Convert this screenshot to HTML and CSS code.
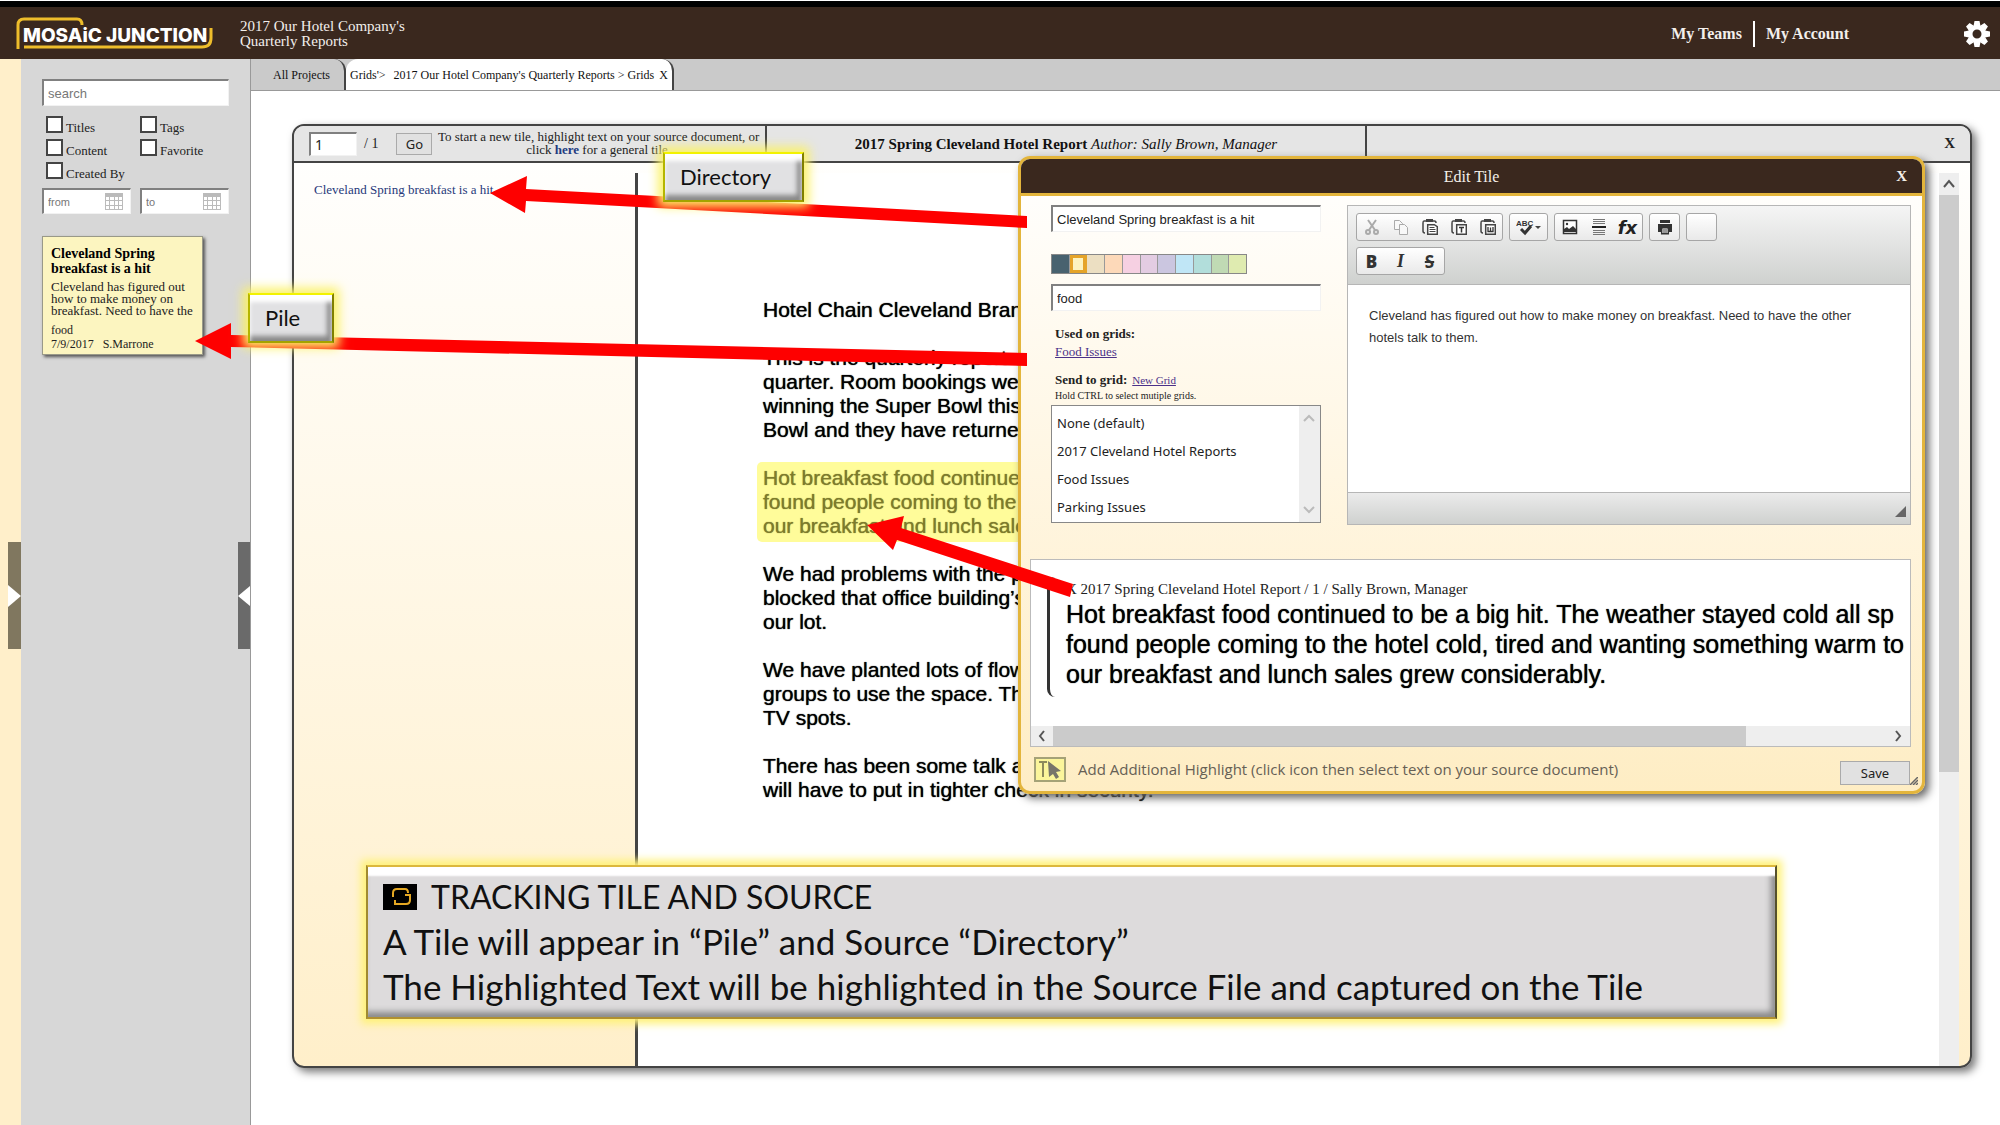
FILE: index.html
```html
<!DOCTYPE html>
<html lang="en">
<head>
<meta charset="utf-8">
<title>Mosaic Junction - Edit Tile</title>
<link rel="stylesheet" href="styles.css">
</head>
<body>
<header class="topbar">
  <svg class="logo" width="200" height="36" viewBox="0 0 200 36" role="img" aria-label="Mosaic Junction">
    <path d="M2 33V9Q2 3 8 3H61Q66 3 66 9" fill="none" stroke="#eebd2b" stroke-width="3"/>
    <path d="M8 31H186Q195 31 195 22V12" fill="none" stroke="#eebd2b" stroke-width="3"/>
    <text class="logo-text" x="7" y="26">MOSAiC JUNCTION</text>
  </svg>
  <h1 class="project">2017 Our Hotel Company's<br>Quarterly Reports</h1>
  <nav class="account">
    <a href="#teams">My Teams</a>
    <a href="#account">My Account</a>
  </nav>
  <button class="gear" aria-label="Settings">
    <svg width="26" height="26" viewBox="0 0 26 26"><g fill="#fff"><path fill-rule="evenodd" d="M13 4a9 9 0 1 0 0 18a9 9 0 1 0 0-18zM13 8.500a4.500 4.500 0 1 1 0 9a4.500 4.500 0 1 1 0-9z"/><g id="teeth"><path d="M10.500 0h5l1 5h-7zM10.500 26h5l1-5h-7zM0 10.500v5l5 1v-7zM26 10.500v5l-5 1v-7z"/></g><use href="#teeth" transform="rotate(45 13 13)"/></g></svg>
  </button>
</header>

<div class="shell">
  <div class="rail"><button class="handle handle-open" aria-label="Open panel"><svg width="13" height="22" viewBox="0 0 13 22"><path d="M0 0L13 11L0 22z" fill="#fff"/></svg></button></div>
  <aside class="sidebar">
    <input class="field search" type="text" placeholder="search" aria-label="Search">
    <div class="filters">
      <label><input type="checkbox"><span>Titles</span></label>
      <label><input type="checkbox"><span>Tags</span></label>
      <label><input type="checkbox"><span>Content</span></label>
      <label><input type="checkbox"><span>Favorite</span></label>
      <label><input type="checkbox"><span>Created By</span></label>
    </div>
    <div class="dates">
      <div class="field date"><input type="text" placeholder="from" aria-label="From date"><svg width="18" height="17" viewBox="0 0 18 17"><path d="M0 0h18v17H0z" fill="#bbb"/><path d="M1 4h3v3H1zM5 4h4v3H5zM10 4h3v3h-3zM14 4h3v3h-3zM1 8h3v4H1zM5 8h4v4H5zM10 8h3v4h-3zM14 8h3v4h-3zM1 13h3v3H1zM5 13h4v3H5zM10 13h3v3h-3zM14 13h3v3h-3z" fill="#fff"/></svg></div>
      <div class="field date"><input type="text" placeholder="to" aria-label="To date"><svg width="18" height="17" viewBox="0 0 18 17"><path d="M0 0h18v17H0z" fill="#bbb"/><path d="M1 4h3v3H1zM5 4h4v3H5zM10 4h3v3h-3zM14 4h3v3h-3zM1 8h3v4H1zM5 8h4v4H5zM10 8h3v4h-3zM14 8h3v4h-3zM1 13h3v3H1zM5 13h4v3H5zM10 13h3v3h-3zM14 13h3v3h-3z" fill="#fff"/></svg></div>
    </div>
    <article class="tile">
      <h2>Cleveland Spring breakfast is a hit</h2>
      <p class="tile-body">Cleveland has figured out<br>how to make money on<br>breakfast. Need to have the</p>
      <p class="tile-meta">food<br>7/9/2017 &nbsp; S.Marrone</p>
    </article>
    <button class="handle handle-close" aria-label="Close panel"><svg width="12" height="20" viewBox="0 0 12 20"><path d="M12 0L0 10L12 20z" fill="#fff"/></svg></button>
  </aside>

  <main class="workspace">
    <nav class="tabs">
      <a class="tab" href="#all">All Projects</a>
      <a class="tab active" href="#grids"><span>Grids'&gt;</span><span class="crumb">2017 Our Hotel Company's Quarterly Reports &gt; Grids</span><span>X</span></a>
    </nav>

    <section class="source">
      <header class="source-head">
        <form class="pager">
          <input class="field page" type="text" value="1" aria-label="Page">
          <span class="total">/ 1</span>
          <button class="btn go" type="button">Go</button>
          <p class="hint">To start a new tile, highlight text on your source document, or<br>click <a href="#new">here</a> for a general tile.</p>
        </form>
        <h2 class="source-title">2017 Spring Cleveland Hotel Report <em>Author: Sally Brown, Manager</em></h2>
        <div class="source-end"><button class="close" aria-label="Close source">X</button></div>
      </header>
      <div class="source-body">
        <div class="directory"><a href="#tile">Cleveland Spring breakfast is a hit</a></div>
        <div class="document">
          <p>Hotel Chain Cleveland Branch</p>
          <p>This is the quarterly report of the<br>quarter. Room bookings were up<br>winning the Super Bowl this year<br>Bowl and they have returned</p>
          <p class="marked">Hot breakfast food continued to be<br>found people coming to the hotel<br>our breakfast and lunch sales grew</p>
          <p>We had problems with the parking<br>blocked that office building’s lot<br>our lot.</p>
          <p>We have planted lots of flowers<br>groups to use the space. They<br>TV spots.</p>
          <p>There has been some talk about<br>will have to put in tighter check in security.</p>
        </div>
        <div class="vscroll">
          <svg width="20" height="22" viewBox="0 0 20 22"><path d="M5 14L10 8L15 14" fill="none" stroke="#555" stroke-width="2"/></svg>
          <div class="vthumb"></div>
        </div>
      </div>

      <section class="dialog" role="dialog" aria-label="Edit Tile">
        <header class="dialog-head"><h2>Edit Tile</h2><button class="close" aria-label="Close dialog">X</button></header>
        <div class="dialog-main">
          <div class="form">
            <input class="field" type="text" value="Cleveland Spring breakfast is a hit" aria-label="Title">
            <div class="swatches">
              <button class="sw c1" aria-label="Slate"></button><button class="sw c2" aria-label="Yellow"></button><button class="sw c3" aria-label="Sand"></button><button class="sw c4" aria-label="Peach"></button><button class="sw c5" aria-label="Pink"></button><button class="sw c6" aria-label="Mauve"></button><button class="sw c7" aria-label="Lavender"></button><button class="sw c8" aria-label="Sky"></button><button class="sw c9" aria-label="Teal"></button><button class="sw c10" aria-label="Green"></button><button class="sw c11" aria-label="Lime"></button>
            </div>
            <input class="field" type="text" value="food" aria-label="Tags">
            <div class="grids">
              <p><b>Used on grids:</b><br><a href="#food">Food Issues</a></p>
              <p class="send"><label for="grid-list"><b>Send to grid:</b></label><a class="small" href="#newgrid">New Grid</a></p>
              <p class="note">Hold CTRL to select mutiple grids.</p>
            </div>
            <div class="listbox">
              <select id="grid-list" multiple size="4">
                <option>None (default)</option><option>2017 Cleveland Hotel Reports</option><option>Food Issues</option><option>Parking Issues</option>
              </select>
              <div class="list-scroll">
                <svg width="12" height="8" viewBox="0 0 12 8"><path d="M1 7L6 2L11 7" fill="none" stroke="#bbb" stroke-width="2"/></svg>
                <svg width="12" height="8" viewBox="0 0 12 8"><path d="M1 1L6 6L11 1" fill="none" stroke="#bbb" stroke-width="2"/></svg>
              </div>
            </div>
          </div>
          <div class="editor">
            <div class="toolbar">
              <div class="tools">
                <button aria-label="Cut"><svg width="16" height="16" viewBox="0 0 16 16" fill="none" stroke="#aaa" stroke-width="2"><path d="M4 1L11 11M12 1L5 11"/><circle cx="4" cy="13" r="2"/><circle cx="12" cy="13" r="2"/></svg></button>
                <button aria-label="Copy"><svg width="16" height="16" viewBox="0 0 16 16" fill="#f8f8f8" stroke="#aaa"><path d="M1.500 1.500h5l3 3v6h-8z"/><path d="M6.500 5.500h5l3 3v7h-8z"/></svg></button>
                <button aria-label="Paste"><svg width="16" height="16" viewBox="0 0 16 16"><path d="M4 2H2Q1 2 1 4V12Q1 14 3 14M11 2h1.500Q14 2 14 4" fill="none" stroke="#444" stroke-width="1.500"/><path d="M4 0h7v3H4z" fill="#444"/><path d="M5.700 5.700h6.600l3 2v7.600H5.700z" fill="#fff" stroke="#444" stroke-width="1.500"/><path d="M7.500 8.500h5M7.500 10.500h6M7.500 12.500h6" stroke="#444"/></svg></button>
                <button aria-label="Paste as plain text"><svg width="16" height="16" viewBox="0 0 16 16"><path d="M4 2H2Q1 2 1 4V12Q1 14 3 14M11 2h1.500Q14 2 14 4" fill="none" stroke="#444" stroke-width="1.500"/><path d="M4 0h7v3H4z" fill="#444"/><path d="M5.700 5.700h9.600v9.600H5.700z" fill="#fff" stroke="#444" stroke-width="1.500"/><path d="M8 8.500h5M10.500 8.500v5" stroke="#333" stroke-width="1.500"/></svg></button>
                <button aria-label="Paste from Word"><svg width="16" height="16" viewBox="0 0 16 16"><path d="M4 2H2Q1 2 1 4V12Q1 14 3 14M11 2h1.500Q14 2 14 4" fill="none" stroke="#444" stroke-width="1.500"/><path d="M4 0h7v3H4z" fill="#444"/><path d="M5.700 5.700h9.600v9.600H5.700z" fill="#fff" stroke="#444" stroke-width="1.500"/><path d="M8 8v4.500h5V8M10.500 8.500v4" fill="none" stroke="#333" stroke-width="1.300"/></svg></button>
              </div>
              <div class="tools spell">
                <button aria-label="Spell check"><svg width="26" height="18" viewBox="0 0 26 18"><text class="abc" x="0" y="8">ABC</text><path d="M5 11L9 15L15 8" fill="none" stroke="#333" stroke-width="3"/><path d="M19 8h6l-3 3z" fill="#444"/></svg></button>
              </div>
              <div class="tools">
                <button aria-label="Image"><svg width="16" height="16" viewBox="0 0 16 16"><path d="M1.500 1.500h13v13h-13z" fill="#fff" stroke="#333" stroke-width="1.500"/><path d="M2 13V10l3-2 2 2 4-3 3 3v3z" fill="#333"/><circle cx="5" cy="5" r="1.200" fill="#333"/></svg></button>
                <button aria-label="Horizontal line"><svg width="16" height="18" viewBox="0 0 16 18"><path d="M2 1.500h12M2 3.500h12M2 5.500h12M2 12.500h12M2 14.500h12M2 16.500h12" stroke="#777"/><path d="M1 9h14" stroke="#222" stroke-width="2"/></svg></button>
                <button class="fx" aria-label="Formula">fx</button>
              </div>
              <div class="tools">
                <button aria-label="Print"><svg width="16" height="16" viewBox="0 0 16 16"><path d="M3 1h10v3H3zM1 5h14v8h-3v-4H4v4H1z" fill="#333"/><path d="M4.700 8.700h6.600v6h-6.600z" fill="#fff" stroke="#333" stroke-width="1.500"/><path d="M6 11h4M6 13h4" stroke="#333"/></svg></button>
              </div>
              <div class="tools"><button aria-label="More"></button></div>
              <div class="break"></div>
              <div class="tools">
                <button class="glyph" aria-label="Bold"><b>B</b></button>
                <button class="glyph ital" aria-label="Italic">I</button>
                <button class="glyph" aria-label="Strikethrough"><s>S</s></button>
              </div>
            </div>
            <textarea aria-label="Tile text">Cleveland has figured out how to make money on breakfast. Need to have the other
hotels talk to them.</textarea>
            <div class="editor-foot"><svg width="11" height="11" viewBox="0 0 11 11"><path d="M11 0V11H0z" fill="#666"/></svg></div>
          </div>
        </div>
        <div class="excerpt">
          <blockquote>
            <cite>X 2017 Spring Cleveland Hotel Report / 1 / Sally Brown, Manager</cite>
            <p>Hot breakfast food continued to be a big hit. The weather stayed cold all sp<br>found people coming to the hotel cold, tired and wanting something warm to<br>our breakfast and lunch sales grew considerably.</p>
          </blockquote>
          <div class="hscroll">
            <svg width="22" height="20" viewBox="0 0 22 20"><path d="M13 5L9 10L13 15" fill="none" stroke="#555" stroke-width="2"/></svg>
            <div class="track"><div class="hthumb"></div></div>
            <svg width="22" height="20" viewBox="0 0 22 20"><path d="M8 5L12 10L8 15" fill="none" stroke="#555" stroke-width="2"/></svg>
          </div>
        </div>
        <footer class="dialog-foot">
          <button class="pick" aria-label="Add additional highlight"><svg width="28" height="22" viewBox="0 0 28 22"><path d="M3 4h8M7 4v15" stroke="#8d8a5c" stroke-width="2" fill="none"/><path d="M12 3L25 13L20 14L23 19L20 21L17 16L13 19z" fill="#77756a"/></svg></button>
          <span>Add Additional Highlight (click icon then select text on your source document)</span>
          <button class="btn save">Save</button>
          <svg class="grip" width="8" height="8" viewBox="0 0 8 8"><path d="M0 8L8 0M3 8L8 3M6 8L8 6" stroke="#666" stroke-width="1.500"/></svg>
        </footer>
      </section>
    </section>
  </main>
</div>

<svg class="arrows" width="1100" height="620" viewBox="0 0 1100 620" aria-hidden="true"><g fill="#fe0000">
  <path d="M490 193L527 176L526 189L1027 216V228L526 201L525 213z"/>
  <path d="M195 341L231 323V335L1027 353V366L231 347V359z"/>
  <path d="M867 525L904 516L901 528L1073 584L1070 597L897 540L893 550z"/>
</g></svg>
<div class="callout tag tag-directory">Directory</div>
<div class="callout tag tag-pile">Pile</div>
<section class="callout banner">
  <h2><svg width="34" height="26" viewBox="0 0 34 26"><path d="M0 0h34v26H0z" fill="#000"/><path d="M10 13V9Q10 5 14 5H22Q25 5 25 9M12 16V20H23Q27 20 27 16V11H22" fill="none" stroke="#e5a823" stroke-width="2"/></svg>TRACKING TILE AND SOURCE</h2>
  <p>A Tile will appear in “Pile” and Source “Directory”</p>
  <p>The Highlighted Text will be highlighted in the Source File and captured on the Tile</p>
</section>
</body>
</html>
```
FILE: styles.css
```css
* { box-sizing: border-box; }
body { margin: 0; min-height: 100vh; display: flex; flex-direction: column; position: relative; background: #fff; color: #222; font-family: "Liberation Serif", serif; font-size: 14px; overflow-x: hidden; }
h1, h2, p { margin: 0; font-weight: normal; }
button { font: inherit; color: inherit; background: none; border: 0; padding: 0; }
svg { display: block; flex: none; }
a { color: inherit; text-decoration: none; }

.topbar { display: flex; align-items: center; height: 58px; margin-top: 1px; flex: none; padding: 2px 10px 0 16px; border-top: 6px solid #000; background: #3a281e; color: #f3efec; }
.logo { margin-right: 24px; }
.logo-text { font: 800 19px Inter, sans-serif; fill: #fff; }
.project { font-size: 15px; line-height: 15px; }
.account { margin-left: auto; display: flex; font-size: 16px; font-weight: bold; }
.account a { line-height: 26px; padding: 0 11px; }
.account a + a { border-left: 2px solid #fff; }
.gear { margin-left: 104px; }

.shell { flex: 1; display: flex; }
.rail { width: 21px; flex: none; background: #ffefca; position: relative; }
.sidebar { width: 230px; flex: none; padding: 20px 21px; background: #d7d7d7; border-right: 1px solid #999; position: relative; }
.handle { position: absolute; right: 0; top: 483px; height: 107px; display: flex; align-items: center; }
.handle-open { background: #80775f; }
.handle-close { background: #6a6a6a; }

.field { border: 1px solid #f2f2f2; border-top: 2px solid #808080; border-left: 2px solid #808080; background: #fff; border-radius: 0; height: 27px; padding: 0 4px; font-family: "Liberation Sans", sans-serif; font-size: 13px; color: #222; outline: 0; }
.search { width: 187px; }
::placeholder { color: #777; opacity: 1; }
.filters { display: grid; grid-template-columns: 94px 1fr; padding: 10px 0 3px 4px; }
.filters label { display: flex; gap: 3px; height: 23px; font-size: 13px; }
.filters span { line-height: 24px; }
.filters input { appearance: none; margin: 0; width: 17px; height: 17px; border: 2px solid #444; background: #fff; }
.dates { display: flex; gap: 9px; }
.date { width: 89px; height: 26px; display: flex; align-items: center; padding-right: 7px; }
.date input { flex: 1; min-width: 0; border: 0; padding: 0; font: 11px "Liberation Sans", sans-serif; }
.tile { width: 161px; height: 119px; margin-top: 22px; padding: 9px 0 0 8px; background: #fcf5c0; border: 1px solid #998; box-shadow: 2px 2px 3px #555; color: #222; }
.tile h2 { font-size: 14px; font-weight: bold; line-height: 15px; color: #000; width: 130px; }
.tile-body { margin-top: 5px; font-size: 13px; line-height: 12px; white-space: nowrap; }
.tile-meta { margin-top: 6px; font-size: 12px; line-height: 14px; }

.workspace { flex: 1; min-width: 0; display: flex; flex-direction: column; }
.tabs { display: flex; height: 32px; background: #cacaca; border-bottom: 1px solid #999; font-size: 12px; line-height: 32px; color: #111; }
.tab { padding: 0 14px 0 22px; border-right: 2px solid #444; border-radius: 0 12px 0 0; }
.active { display: flex; padding: 0 4px; background: #fff; height: 31px; border-radius: 12px 12px 0 0; }
.crumb { margin: 0 5px 0 8px; }

.source { flex: 1; margin: 33px 28px 57px 41px; border: 2px solid #444; border-radius: 12px; box-shadow: 4px 4px 8px #777; display: flex; flex-direction: column; position: relative; background: linear-gradient(#fff, #ffefca); }
.source-head { display: flex; height: 37px; flex: none; background: #e5e5e5; border-bottom: 2px solid #444; border-radius: 10px 10px 0 0; color: #222; }
.pager { display: flex; align-items: center; width: 473px; padding-left: 15px; border-right: 2px solid #444; }
.page { width: 48px; height: 24px; font: 14px "Noto Sans", sans-serif; }
.total { margin: 0 18px 0 7px; }
.btn { border: 1px solid #aaa; background: #e1e1e1; font: 13px "Noto Sans", sans-serif; }
.go { width: 36px; height: 22px; }
.hint { flex: 1; text-align: center; font-size: 13px; line-height: 13px; white-space: nowrap; margin-top: -2px; }
.hint a { color: #223a80; font-weight: bold; }
.source-title { width: 600px; border-right: 2px solid #444; text-align: center; font-size: 15px; line-height: 36px; font-weight: bold; color: #111; }
.source-title em { font-weight: normal; }
.source-end { flex: 1; display: flex; justify-content: flex-end; padding-right: 15px; }
.close { font-weight: bold; font-size: 15px; }
.source-body { flex: 1; display: flex; margin-right: 11px; }
.directory { width: 341px; flex: none; padding: 19px 20px; font-size: 13px; color: #26397a; }
.document { flex: 1; background: #fff; border-left: 3px solid #444; margin-top: 10px; padding: 125px 0 0 125px; font: 21px/24px "Liberation Sans", sans-serif; color: #000; text-shadow: 0 0 1px #000; white-space: nowrap; }
.document p { margin-bottom: 24px; }
.document .marked { width: 420px; margin: -4px 0 20px -6px; padding: 4px 6px; border-radius: 5px; background: #fffc9a; color: #7d7b2c; text-shadow: 0 0 1px #7d7b2c; }
.vscroll { width: 20px; margin-top: 10px; background: #eee; border-radius: 0; }
.vthumb { height: 577px; background: #ccc; }

.dialog { position: absolute; left: 724px; right: 45px; top: 30px; border: 3px solid #e3b53c; border-radius: 12px; box-shadow: 4px 4px 8px #666; background: linear-gradient(#fff, #fff6e2 50%, #feedc4); }
.dialog-head { display: flex; height: 37px; border-bottom: 3px solid #e3b53c; background: #3a281e; border-radius: 9px 9px 0 0; color: #f5f0ea; padding: 0 15px 0 26px; }
.dialog-head h2 { flex: 1; text-align: center; font-size: 16px; line-height: 36px; }
.dialog-main { display: flex; gap: 26px; padding: 9px 11px 0 30px; }
.form { width: 270px; flex: none; }
.form .field { display: block; width: 100%; }
.swatches { display: flex; width: 196px; height: 20px; margin: 22px 0 10px; border: 1px solid #888; }
.sw { flex: 1; border-right: 1px solid #999; }
.sw:last-child { border-right: 0; }
.c1 { background: #48626f; } .c2 { background: #fdf3c0; box-shadow: inset 0 0 0 3px #e5a429; border-color: #e5a429; } .c3 { background: #ecdfc2; } .c4 { background: #fdd9b9; } .c5 { background: #f6d0e2; } .c6 { background: #e3cce2; } .c7 { background: #cbc6e0; } .c8 { background: #c0e6f6; } .c9 { background: #b2dedb; } .c10 { background: #c0dab4; } .c11 { background: #dfebb0; }
.grids { padding: 14px 4px 0; font-size: 13px; line-height: 18px; height: 94px; }
.grids a { color: #4b3189; text-decoration: underline; }
.send { margin-top: 10px; }
.grids .small { margin-left: 5px; font-size: 11px; }
.note { line-height: 14px; font-size: 10px; }
.listbox { display: flex; height: 118px; border: 1px solid #888; background: #fff; }
.listbox select { flex: 1; border: 0; padding: 4px 0 0; outline: 0; overflow: hidden; background: #fff; font: 13px "Noto Sans", sans-serif; color: #222; }
.listbox option { height: 28px; padding: 4px 5px; }
.list-scroll { width: 21px; padding: 8px 4px; background: #eee; display: flex; flex-direction: column; justify-content: space-between; }

.editor { flex: 1; min-width: 0; height: 320px; display: flex; flex-direction: column; border: 1px solid #b6b6b6; background: #fff; }
.toolbar { display: flex; flex-wrap: wrap; align-content: flex-start; gap: 3px 6px; height: 79px; padding: 7px 8px; border-bottom: 1px solid #b6b6b6; background: linear-gradient(#f5f5f5, #cfd1cf); }
.tools { display: flex; height: 28px; border: 1px solid #a6a6a6; border-radius: 3px; background: linear-gradient(#fff, #e9e9e9); }
.tools button { width: 29px; display: flex; align-items: center; justify-content: center; }
.tools.spell button { width: 37px; }
.abc { font: bold 8px "Liberation Sans", sans-serif; fill: #333; }
.break { width: 100%; }
.tools .fx { font: italic bold 18px "DejaVu Sans", sans-serif; color: #222; }
.tools .glyph { font: bold 17px "Noto Sans", sans-serif; color: #333; }
.tools .ital { font: italic bold 18px "Liberation Serif", serif; }
.glyph s { text-decoration-thickness: 2px; }
.editor textarea { flex: 1; border: 0; outline: 0; resize: none; padding: 20px 21px; font: 13px/22px "Liberation Sans", sans-serif; color: #333; }
.editor-foot { height: 32px; border-top: 1px solid #b6b6b6; background: linear-gradient(#ebebeb, #cfd1cf); display: flex; justify-content: flex-end; align-items: flex-end; padding: 0 4px 7px; }

.excerpt { margin: 34px 11px 0 9px; height: 188px; border: 1px solid #bbb; background: #fff; display: flex; flex-direction: column; overflow: hidden; }
.excerpt blockquote { margin: 17px 0 0 16px; height: 120px; padding: 2px 0 0 16px; border-left: 3px solid #333; border-radius: 8px 0 0 8px; white-space: nowrap; }
.excerpt cite { display: block; font-style: normal; font-size: 15px; line-height: 20px; color: #222; }
.excerpt p { font: 25px/30px "Liberation Sans", sans-serif; color: #000; text-shadow: 0 0 1px #000; }
.hscroll { margin-top: auto; display: flex; height: 20px; background: #eee; }
.track { flex: 1; }
.hthumb { width: 83%; height: 20px; background: #cbcbcb; }
.dialog-foot { display: flex; align-items: center; height: 44px; padding: 0 4px 0 13px; font: 15px "Open Sans", sans-serif; color: #666055; }
.pick { width: 32px; height: 25px; border: 2px solid #a5a277; background: #fbf59b; margin-right: 12px; display: flex; align-items: center; justify-content: center; }
.save { width: 70px; height: 24px; margin: 8px 0 0 auto; color: #222; }
.grip { align-self: flex-end; margin-bottom: 6px; }

.arrows { position: absolute; left: 0; top: 0; }
.callout { position: absolute; border-style: solid; color: #111; font-family: Lato, sans-serif; }
.tag { display: flex; align-items: center; border-width: 2px; border-color: #f2f200 #7f7f00 #a3a300 #b5b500; background: #e1e1e3; box-shadow: 0 0 10px 5px #fbf26a, inset 0 7px 4px #fff, inset -5px -5px 5px #888; font-size: 22px; padding: 0 0 1px 15px; }
.tag-directory { left: 663px; top: 152px; width: 141px; height: 50px; }
.tag-pile { left: 248px; top: 293px; width: 86px; height: 50px; }
.banner { left: 366px; right: 223px; top: 865px; height: 154px; border-width: 2px; border-color: #dcb83c #55502c #b09030 #a08a30; background: #dddbdc; box-shadow: 0 0 8px 5px #fff27a, inset 0 10px 2px -1px #fff, inset -4px -5px 6px #888; padding: 7px 15px; font-size: 35px; line-height: 45px; white-space: nowrap; }
.banner h2 { font-size: 32px; display: flex; align-items: center; gap: 14px; }
```
